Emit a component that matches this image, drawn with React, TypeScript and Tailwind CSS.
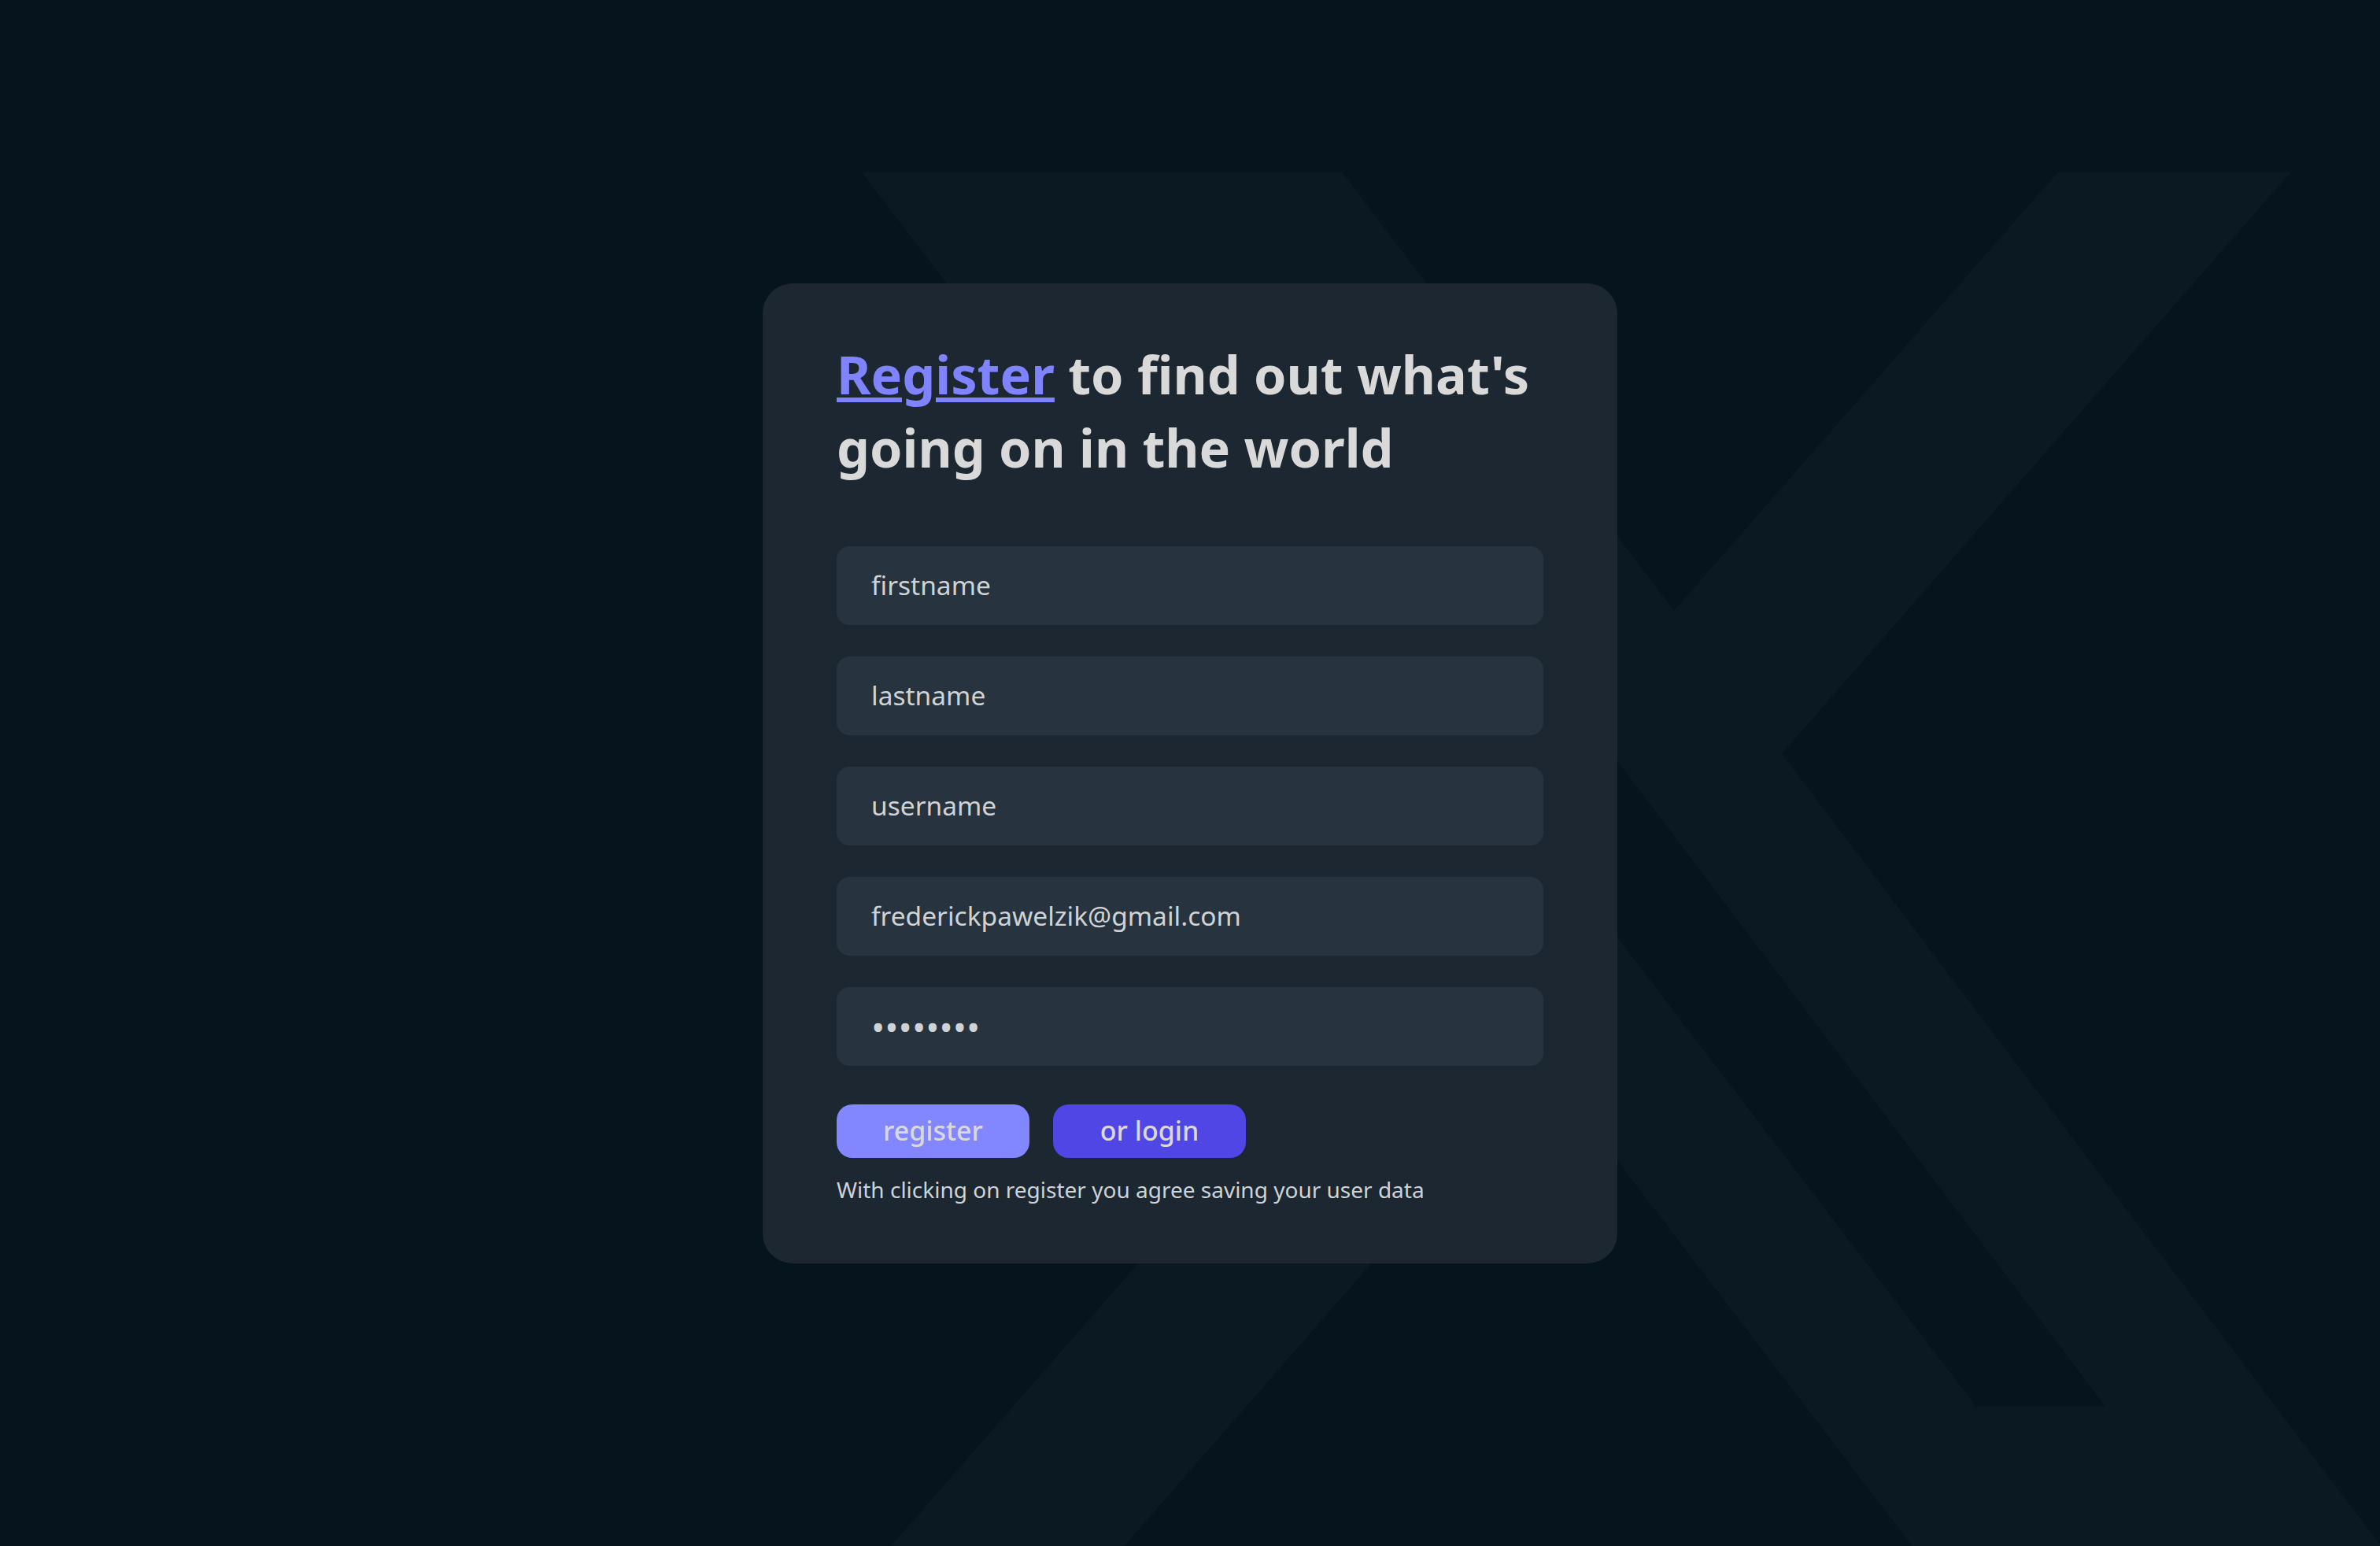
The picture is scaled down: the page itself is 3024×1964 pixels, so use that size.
import React from "react";

function XMark() {
  return (
    <svg
      viewBox="0 0 512 512"
      className="absolute left-[982px] top-[17px] w-[2148px] h-[2148px] pointer-events-none"
      aria-hidden="true"
    >
      <path
        fill="#0b1922"
        fillRule="evenodd"
        d="M389.2 48h70.6L305.6 224.2 487 464H345L233.7 318.6 106.5 464H35.8L200.7 275.5 26.8 48H172.4L272.9 180.9 389.2 48zM364.4 421.8h39.1L151.1 88h-42L364.4 421.8z"
      />
    </svg>
  );
}

const baseField =
  "block w-full h-[100px] rounded-[16px] bg-[#27333e] pl-[44px] pr-[24px] text-[#cfd3d6] placeholder:text-[#cfd3d6] outline-none border-0 font-['Noto_Sans','DejaVu_Sans',sans-serif]";
const fieldClass = baseField + " text-[33.5px] pb-[2px]";
const passwordClass = baseField + " text-[46px] tracking-normal";

export default function App() {
  return (
    <div className="relative h-screen w-full overflow-hidden bg-[#06141d] flex items-center justify-center font-['Noto_Sans','DejaVu_Sans',sans-serif]">
      <XMark />
      <div className="relative z-10 w-[1086px] rounded-[38px] bg-[#1c2731] px-[94px] pt-[69px] pb-[75px]">
        <h1 className="text-[66.5px] leading-[93px] font-bold text-[#d9d9d9]">
          <a
            href="#"
            className="text-[#8083ff] underline decoration-[6px] underline-offset-[4px]"
          >
            Register
          </a>{" "}
          to find out what's going on in the world
        </h1>

        <form className="mt-[79px] flex flex-col gap-[40px]" onSubmit={(e) => e.preventDefault()}>
          <input className={fieldClass} placeholder="firstname" />
          <input className={fieldClass} placeholder="lastname" />
          <input className={fieldClass} placeholder="username" />
          <input className={fieldClass} defaultValue="frederickpawelzik@gmail.com" />
          <input type="password" className={passwordClass} defaultValue="12345678" />
        </form>

        <div className="mt-[49px] flex gap-[30px]">
          <button className="w-[245px] h-[68px] rounded-[20px] bg-[#8287ff] text-[34px] font-medium text-[#d9d9d9] flex items-center justify-center">
            register
          </button>
          <button className="w-[245px] h-[68px] rounded-[20px] bg-[#4f46e5] text-[34px] font-medium text-[#d9d9d9] flex items-center justify-center">
            or login
          </button>
        </div>

        <p className="mt-[21px] text-[28px] leading-[38px] text-[#cfd3d6]">
          With clicking on register you agree saving your user data
        </p>
      </div>
    </div>
  );
}
